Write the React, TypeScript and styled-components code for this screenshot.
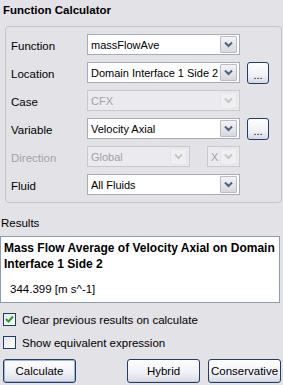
import React from 'react';
import styled, { createGlobalStyle } from 'styled-components';

const GlobalStyle = createGlobalStyle`
  html, body {
    margin: 0;
    padding: 0;
    background: #e3e2e7;
  }
  body {
    font-family: 'Liberation Sans', Arial, sans-serif;
    font-size: 11px;
    color: #000;
  }
`;

const Panel = styled.div`
  width: 283px;
  height: 385px;
  background: #e3e2e7;
  display: flex;
  flex-direction: column;
  overflow: hidden;
`;

const Title = styled.div`
  height: 26px;
  line-height: 20px;
  padding-left: 3px;
  font-weight: bold;
  font-size: 11.5px;
`;

const GroupBox = styled.div`
  margin-left: 5px;
  width: 270px;
  border: 1px solid #c5c4ca;
  border-radius: 4px;
  padding: 7px 0 7px 5px;
  display: flex;
  flex-direction: column;
  gap: 7px;
`;

const Row = styled.div`
  display: flex;
  align-items: center;
  height: 21px;
`;

const Label = styled.span<{ disabled?: boolean }>`
  width: 76px;
  flex: none;
  font-size: 11.5px;
  padding-top: 2px;
  color: ${(p) => (p.disabled ? '#a3a2a6' : '#000')};
`;

const Combo = styled.div<{ width: number; disabled?: boolean }>`
  width: ${(p) => p.width}px;
  height: 21px;
  box-sizing: border-box;
  border: 1px solid ${(p) => (p.disabled ? '#c9c8cc' : '#a5acb5')};
  background: ${(p) => (p.disabled ? '#ebeaee' : '#fff')};
  display: flex;
  align-items: center;
  padding: 2px;
  flex: none;
`;

const ComboText = styled.span<{ disabled?: boolean }>`
  flex: 1;
  min-width: 0;
  padding-left: 1px;
  font-size: 11px;
  white-space: nowrap;
  overflow: hidden;
  color: ${(p) => (p.disabled ? '#a3a2a6' : '#000')};
`;

const DropBtn = styled.div<{ disabled?: boolean }>`
  width: 17px;
  height: 17px;
  flex: none;
  box-sizing: border-box;
  border: 1px solid ${(p) => (p.disabled ? '#e4e3e6' : '#b7bcc6')};
  border-radius: 1px;
  background: ${(p) =>
    p.disabled ? '#f0efef' : 'linear-gradient(#f4f4f6, #d8d9df)'};
  display: flex;
  align-items: center;
  justify-content: center;
`;

const DotsBtn = styled.div`
  margin-left: 7px;
  width: 22px;
  height: 22px;
  box-sizing: border-box;
  border: 1px solid #1f3d66;
  border-radius: 3px;
  background: linear-gradient(#ffffff, #eceef4 70%, #d6d8e2);
  display: flex;
  align-items: flex-end;
  justify-content: center;
  padding-bottom: 4px;
  font-size: 11px;
  line-height: 8px;
`;

const Gap = styled.div<{ w: number }>`
  width: ${(p) => p.w}px;
  flex: none;
`;

const ResultsLabel = styled.div`
  margin-top: 13px;
  padding-left: 1px;
  font-size: 11.5px;
  height: 20px;
  line-height: 14px;
`;

const ResultBox = styled.div`
  width: 280px;
  height: 67px;
  box-sizing: border-box;
  border: 1px solid #8e9bb0;
  background: #fff;
  padding: 3px 2px 0 3px;
`;

const ResultTitle = styled.div`
  font-weight: bold;
  font-size: 12px;
  line-height: 16px;
`;

const ResultValue = styled.div`
  margin-top: 11px;
  padding-left: 6px;
  font-size: 11.5px;
`;

const CheckRow = styled.label`
  display: flex;
  align-items: center;
  height: 13px;
  padding-left: 3px;
  margin-top: 10px;
  gap: 6px;
  font-size: 11.5px;
`;

const CheckBox = styled.span`
  width: 13px;
  height: 13px;
  box-sizing: border-box;
  border: 1px solid #1c3e6a;
  background: linear-gradient(135deg, #e6e6e8, #ffffff);
  display: flex;
  align-items: center;
  justify-content: center;
`;

const ButtonRow = styled.div`
  display: flex;
  padding-left: 3px;
  margin-top: 10px;
`;

const Button = styled.div<{ focused?: boolean; w: number; ml?: number }>`
  width: ${(p) => p.w}px;
  height: 24px;
  margin-left: ${(p) => p.ml ?? 0}px;
  box-sizing: border-box;
  border: 1px solid #1f3d66;
  border-radius: 3px;
  background: linear-gradient(#ffffff, #eff0f5 60%, #d9dbe5);
  box-shadow: ${(p) =>
    p.focused ? 'inset 0 0 0 1px #9fb6dc' : 'inset 0 -1px 0 #c9cbd6'};
  display: flex;
  align-items: center;
  justify-content: center;
  font-size: 11.5px;
  white-space: nowrap;
`;

function Chevron({ disabled }: { disabled?: boolean }) {
  return (
    <svg width="9" height="7" viewBox="0 0 9 7">
      <polyline
        points="1,1.5 4.5,5 8,1.5"
        fill="none"
        stroke={disabled ? '#c6c6c8' : '#4d6185'}
        strokeWidth="2"
      />
    </svg>
  );
}

function Check() {
  return (
    <svg width="9" height="9" viewBox="0 0 9 9">
      <polyline
        points="1,4 3.5,6.5 8,1.5"
        fill="none"
        stroke="#21a121"
        strokeWidth="2"
      />
    </svg>
  );
}

interface IComboRow {
  label: string;
  value: string;
  disabled?: boolean;
  dots?: boolean;
}

function ComboRow({ label, value, disabled, dots }: IComboRow) {
  return (
    <Row>
      <Label>{label}</Label>
      <Combo width={153} disabled={disabled}>
        <ComboText disabled={disabled}>{value}</ComboText>
        <DropBtn disabled={disabled}>
          <Chevron disabled={disabled} />
        </DropBtn>
      </Combo>
      {dots && <DotsBtn>...</DotsBtn>}
    </Row>
  );
}

export default function App() {
  return (
    <>
      <GlobalStyle />
      <Panel>
        <Title>Function Calculator</Title>
        <GroupBox>
          <ComboRow label="Function" value="massFlowAve" />
          <ComboRow label="Location" value="Domain Interface 1 Side 2" dots />
          <ComboRow label="Case" value="CFX" disabled />
          <ComboRow label="Variable" value="Velocity Axial" dots />
          <Row>
            <Label disabled>Direction</Label>
            <Combo width={103} disabled>
              <ComboText disabled>Global</ComboText>
              <DropBtn disabled>
                <Chevron disabled />
              </DropBtn>
            </Combo>
            <Gap w={17} />
            <Combo width={33} disabled>
              <ComboText disabled>X</ComboText>
              <DropBtn disabled>
                <Chevron disabled />
              </DropBtn>
            </Combo>
          </Row>
          <ComboRow label="Fluid" value="All Fluids" />
        </GroupBox>
        <ResultsLabel>Results</ResultsLabel>
        <ResultBox>
          <ResultTitle>
            Mass Flow Average of Velocity Axial on Domain Interface 1 Side 2
          </ResultTitle>
          <ResultValue>344.399 [m s^-1]</ResultValue>
        </ResultBox>
        <CheckRow>
          <CheckBox>
            <Check />
          </CheckBox>
          Clear previous results on calculate
        </CheckRow>
        <CheckRow>
          <CheckBox />
          Show equivalent expression
        </CheckRow>
        <ButtonRow>
          <Button w={73} focused>
            Calculate
          </Button>
          <Button w={73} ml={51}>
            Hybrid
          </Button>
          <Button w={73} ml={8}>
            Conservative
          </Button>
        </ButtonRow>
      </Panel>
    </>
  );
}
